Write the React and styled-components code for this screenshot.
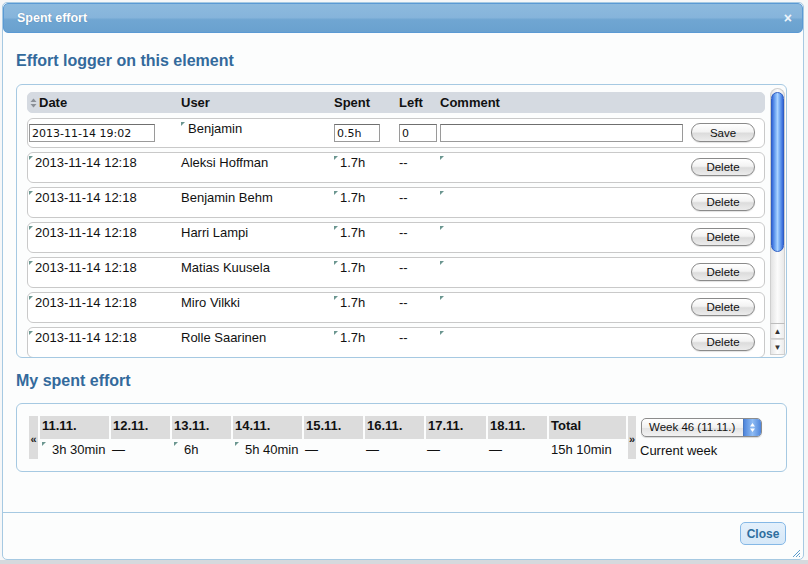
import styled, { createGlobalStyle } from "styled-components";

const GlobalStyle = createGlobalStyle`
  html, body { margin: 0; padding: 0; }
  body {
    background: #d6d9dd;
    font-family: "Liberation Sans", Arial, sans-serif;
    overflow: hidden;
  }
`;

const Page = styled.div`
  width: 808px;
  height: 564px;
  box-sizing: border-box;
  padding: 2px 0 0 2px;
  background: linear-gradient(#f6f7f8 0, #f6f7f8 560px, #d6d9dd 560px);
`;

const Dialog = styled.div`
  position: relative;
  width: 802px;
  height: 558px;
  box-sizing: border-box;
  border: 1px solid #a6c9e2;
  border-radius: 5px;
  background: #fcfdfd;
  display: flex;
  flex-direction: column;
  overflow: hidden;
`;

const TitleBar = styled.div`
  height: 30px;
  box-sizing: border-box;
  border: 1px solid #5b9ad4;
  border-radius: 5px;
  background: linear-gradient(#8dbade, #86b4db 48%, #70a6d2 56%, #6aa1cf);
  display: flex;
  align-items: center;
  justify-content: space-between;
  padding: 0 10px 0 13px;
  color: #fff;
`;

const Title = styled.span`
  font-size: 12.5px;
  font-weight: bold;
  text-shadow: 0 0 1px rgba(40, 80, 130, 0.5);
`;

const CloseX = styled.span`
  font-size: 14px;
  font-weight: bold;
  line-height: 1;
  color: #eef5fb;
`;

const Content = styled.div`
  flex: 1;
  padding: 0 16px 0 13px;
`;

const Heading = styled.h2`
  margin: ${({ $top }) => $top}px 0 0;
  font-size: 16px;
  line-height: 20px;
  font-weight: bold;
  color: #336a9c;
`;

const LoggerBox = styled.div`
  margin-top: 13px;
  height: 274px;
  box-sizing: border-box;
  border: 1px solid #a6c9e2;
  border-radius: 6px;
  display: flex;
  overflow: hidden;
`;

const TableArea = styled.div`
  flex: 1;
  padding: 7px 0 0 10px;
  overflow: hidden;
`;

const cols = "153px 153px 65px 41px 1fr 73px";

const HeaderRow = styled.div`
  display: grid;
  grid-template-columns: ${cols};
  height: 21px;
  box-sizing: border-box;
  border: 1px solid #d5dae1;
  border-radius: 5px;
  background: #d5dae1;
  align-items: center;
  font-size: 13px;
  font-weight: bold;
  color: #111;
`;

const HeadCell = styled.div`
  display: flex;
  align-items: center;
  gap: 2px;
  padding-left: ${({ $pad }) => $pad || 0}px;
`;

const Row = styled.div`
  display: grid;
  grid-template-columns: ${cols};
  height: ${({ $h }) => $h}px;
  margin-top: ${({ $gap }) => $gap}px;
  box-sizing: border-box;
  border: 1px solid #c9c9c9;
  border-radius: 6px;
  background: #fff;
  font-size: 13px;
  color: #111;
`;

const Cell = styled.div`
  display: flex;
  align-items: flex-start;
  padding: ${({ $top }) => $top ?? 2}px 0 0 ${({ $pad }) => $pad || 0}px;
  line-height: 15px;
  white-space: nowrap;
`;

const Mark = styled.span`
  width: 0;
  height: 0;
  flex: none;
  margin: ${({ $m }) => $m || "1px 2px 0 1px"};
  border-top: 4px solid #6b9690;
  border-right: 4px solid transparent;
`;

const Input = styled.input`
  box-sizing: border-box;
  width: ${({ $w }) => $w}px;
  height: 18px;
  margin-left: ${({ $ml }) => $ml || 0}px;
  border: 1px solid #9a9a9a;
  border-top-color: #6f6f6f;
  padding: 0 2px;
  font-family: "DejaVu Sans", sans-serif;
  font-size: 11px;
  color: #111;
  background: #fff;
  outline: none;
`;

const ActionCell = styled.div`
  display: flex;
  align-items: center;
  padding-bottom: 1px;
`;

const AquaButton = styled.button`
  width: 64px;
  height: ${({ $h }) => $h || 18}px;
  padding: 0;
  border: 1px solid #8a8a8a;
  border-radius: 9px;
  background: linear-gradient(#ffffff, #f3f3f3 45%, #dcdcdc 55%, #ececec);
  font-family: "Liberation Sans", Arial, sans-serif;
  font-size: 11.5px;
  color: #111;
  box-shadow: 0 1px 1px rgba(0, 0, 0, 0.12);
`;

const Scrollbar = styled.div`
  width: 15px;
  margin: 3px 1px 2px 5px;
  display: flex;
  flex-direction: column;
`;

const Track = styled.div`
  flex: 1;
  border: 1px solid #cfcfcf;
  border-bottom: none;
  border-radius: 8px 8px 0 0;
  background: linear-gradient(to right, #e3e3e3, #fbfbfb 50%, #e9e9e9);
  padding: 3px 0 0 0;
`;

const Thumb = styled.div`
  height: 160px;
  box-sizing: border-box;
  border: 1px solid #2f5fc4;
  border-radius: 7px;
  background: linear-gradient(to right, #3467d8, #6fa6f2 28%, #a9d2ff 50%, #6fa6f2 72%, #3467d8);
`;

const Arrow = styled.div`
  height: 16px;
  box-sizing: border-box;
  border: 1px solid #cfcfcf;
  border-top-color: ${({ $first }) => ($first ? "#bdbdbd" : "#d9d9d9")};
  background: linear-gradient(to right, #e6e6e6, #fdfdfd 50%, #ececec);
  display: flex;
  align-items: center;
  justify-content: center;
  font-size: 8px;
  color: #333;
`;

const WeekBox = styled.div`
  margin-top: 12px;
  height: 69px;
  box-sizing: border-box;
  border: 1px solid #a6c9e2;
  border-radius: 6px;
  padding: 12px 0 0 12px;
`;

const WeekGrid = styled.div`
  display: grid;
  grid-template-columns: 9px 69px 59px 59px 69px 59px 59px 60px 59px 77px 8px auto;
  grid-template-rows: 23px 20px;
  column-gap: 2px;
  font-size: 13px;
  color: #111;
`;

const GridItem = styled.div`
  grid-column: ${({ $col }) => $col};
  grid-row: ${({ $row }) => $row};
`;

const Nav = styled(GridItem)`
  background: #dcdcdc;
  display: flex;
  align-items: center;
  justify-content: center;
  padding-top: 3px;
  font-size: 11px;
  font-weight: bold;
  color: #222;
`;

const DayHead = styled(GridItem)`
  background: #dcdcdc;
  padding: 2px 0 0 2px;
  line-height: 15px;
  font-weight: bold;
`;

const DayValue = styled(GridItem)`
  display: flex;
  align-items: flex-start;
  padding: 3px 0 0 ${({ $pad }) => $pad ?? 1}px;
  line-height: 15px;
  white-space: nowrap;
`;

const SelectCell = styled(GridItem)`
  padding: 2px 0 0 3px;
`;

const Select = styled.div`
  width: 121px;
  height: 19px;
  box-sizing: border-box;
  border: 1px solid #8c8c8c;
  border-radius: 5px;
  display: flex;
  overflow: hidden;
  background: linear-gradient(#ffffff, #f1f1f1 50%, #e2e2e2 51%, #f2f2f2);
  box-shadow: 0 1px 1px rgba(0, 0, 0, 0.15);
`;

const SelectText = styled.span`
  flex: 1;
  padding-left: 7px;
  font-size: 11.5px;
  line-height: 17px;
  color: #111;
`;

const SelectArrows = styled.span`
  width: 17px;
  border-left: 1px solid #4a78c0;
  background: linear-gradient(to right, #4f86dc, #8fbcf3 50%, #4f86dc);
  display: flex;
  align-items: center;
  justify-content: center;
`;

const CurrentWeek = styled(GridItem)`
  padding: 4px 0 0 2px;
  line-height: 15px;
  white-space: nowrap;
`;

const Footer = styled.div`
  height: 47px;
  box-sizing: border-box;
  border-top: 1px solid #a6c9e2;
  display: flex;
  justify-content: flex-end;
  padding: 9px 17px 0 0;
`;

const CloseButton = styled.button`
  width: 46px;
  height: 23px;
  padding: 0;
  border: 1px solid #85b8e6;
  border-radius: 5px;
  background: linear-gradient(#e4f0fb, #d6e8f8);
  font-family: "Liberation Sans", Arial, sans-serif;
  font-size: 12px;
  font-weight: bold;
  color: #2e6e9e;
`;

const Grip = styled.svg`
  position: absolute;
  right: 2px;
  bottom: 1px;
`;

const SortIcon = () => (
  <svg width="7" height="10" viewBox="0 0 7 10">
    <path d="M3.5 0.5 L6.5 4 L0.5 4 Z" fill="#8a8f96" />
    <path d="M3.5 9.5 L6.5 6 L0.5 6 Z" fill="#8a8f96" />
  </svg>
);

const entries = [
  "Aleksi Hoffman",
  "Benjamin Behm",
  "Harri Lampi",
  "Matias Kuusela",
  "Miro Vilkki",
  "Rolle Saarinen",
];

const days = [
  { d: "11.11.", v: "3h 30min", mark: true },
  { d: "12.11.", v: "—" },
  { d: "13.11.", v: "6h", mark: true },
  { d: "14.11.", v: "5h 40min", mark: true },
  { d: "15.11.", v: "—" },
  { d: "16.11.", v: "—" },
  { d: "17.11.", v: "—" },
  { d: "18.11.", v: "—" },
];

export default function App() {
  return (
    <>
      <GlobalStyle />
      <Page>
        <Dialog>
          <TitleBar>
            <Title>Spent effort</Title>
            <CloseX>×</CloseX>
          </TitleBar>

          <Content>
            <Heading $top={18}>Effort logger on this element</Heading>
            <LoggerBox>
              <TableArea>
                <HeaderRow>
                  <HeadCell $pad={2}>
                    <SortIcon />
                    Date
                  </HeadCell>
                  <HeadCell>User</HeadCell>
                  <HeadCell>Spent</HeadCell>
                  <HeadCell>Left</HeadCell>
                  <HeadCell>Comment</HeadCell>
                  <HeadCell />
                </HeaderRow>

                <Row $h={30} $gap={5}>
                  <Cell $top={5}>
                    <Input $w={126} $ml={1} defaultValue="2013-11-14 19:02" />
                  </Cell>
                  <Cell $top={2}>
                    <Mark $m="1px 3px 0 0" />
                    Benjamin
                  </Cell>
                  <Cell $top={5}>
                    <Input $w={46} defaultValue="0.5h" />
                  </Cell>
                  <Cell $top={5}>
                    <Input $w={38} defaultValue="0" />
                  </Cell>
                  <Cell $top={5}>
                    <Input $w={243} defaultValue="" />
                  </Cell>
                  <ActionCell>
                    <AquaButton $h={19}>Save</AquaButton>
                  </ActionCell>
                </Row>

                {entries.map((name) => (
                  <Row key={name} $h={31} $gap={4}>
                    <Cell>
                      <Mark />
                      2013-11-14 12:18
                    </Cell>
                    <Cell>{name}</Cell>
                    <Cell>
                      <Mark $m="1px 2px 0 0" />
                      1.7h
                    </Cell>
                    <Cell>--</Cell>
                    <Cell>
                      <Mark $m="1px 0 0 0" />
                    </Cell>
                    <ActionCell>
                      <AquaButton>Delete</AquaButton>
                    </ActionCell>
                  </Row>
                ))}
              </TableArea>

              <Scrollbar>
                <Track>
                  <Thumb />
                </Track>
                <Arrow $first>▲</Arrow>
                <Arrow>▼</Arrow>
              </Scrollbar>
            </LoggerBox>

            <Heading $top={13}>My spent effort</Heading>
            <WeekBox>
              <WeekGrid>
                <Nav $col={1} $row="1 / span 2">«</Nav>
                {days.map((x, i) => (
                  <DayHead key={x.d} $col={i + 2} $row={1}>
                    {x.d}
                  </DayHead>
                ))}
                <DayHead $col={10} $row={1}>Total</DayHead>
                <Nav $col={11} $row="1 / span 2">»</Nav>
                <SelectCell $col={12} $row={1}>
                  <Select>
                    <SelectText>Week 46 (11.11.)</SelectText>
                    <SelectArrows>
                      <svg width="7" height="11" viewBox="0 0 7 11">
                        <path d="M3.5 1 L6 4.5 L1 4.5 Z" fill="#fff" />
                        <path d="M3.5 10 L6 6.5 L1 6.5 Z" fill="#fff" />
                      </svg>
                    </SelectArrows>
                  </Select>
                </SelectCell>
                {days.map((x, i) => (
                  <DayValue key={x.d} $col={i + 2} $row={2}>
                    {x.mark && <Mark $m="0 6px 0 1px" />}
                    {x.v}
                  </DayValue>
                ))}
                <DayValue $col={10} $row={2} $pad={2}>
                  15h 10min
                </DayValue>
                <CurrentWeek $col={12} $row={2}>Current week</CurrentWeek>
              </WeekGrid>
            </WeekBox>
          </Content>

          <Footer>
            <CloseButton>Close</CloseButton>
          </Footer>

          <Grip width="9" height="9" viewBox="0 0 9 9">
            <path d="M1 8 L8 1 M4 8 L8 4 M7 8 L8 7" stroke="#5c9ccc" strokeWidth="1" />
          </Grip>
        </Dialog>
      </Page>
    </>
  );
}
